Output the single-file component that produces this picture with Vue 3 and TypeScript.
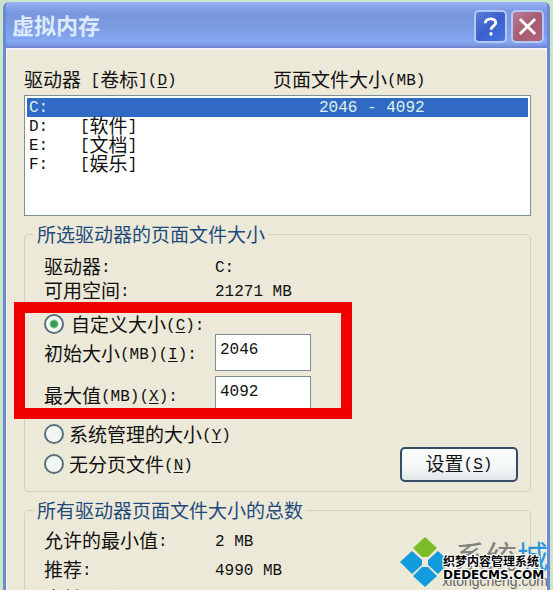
<script setup lang="ts">
import { h, ref, type FunctionalComponent } from 'vue'

interface Drive {
  letter: string
  label: string
  size: string
}

const drives: Drive[] = [
  { letter: 'C:', label: '', size: '2046 - 4092' },
  { letter: 'D:', label: '[软件]', size: '' },
  { letter: 'E:', label: '[文档]', size: '' },
  { letter: 'F:', label: '[娱乐]', size: '' },
]

const selected = ref('C:')
const mode = ref<'custom' | 'system' | 'none'>('custom')
const initialSize = ref('2046')
const maximumSize = ref('4092')

// Sets Latin runs in the half-width face; "&" marks the access key.
const Txt: FunctionalComponent<{ t: string }> = (props) =>
  (props.t.match(/&[A-Z]|[\x20-\x25\x27-\x7e]+|[^\x20-\x7e]+/g) ?? []).map((run) => {
    if (run[0] === '&') return h('u', { class: 'latin' }, run[1])
    return run.charCodeAt(0) < 127 ? h('span', { class: 'latin' }, run) : run
  })
Txt.props = ['t']
</script>

<template>
  <div class="desktop">
    <main class="window">
      <header class="titlebar">
        <h1>虚拟内存</h1>
        <button class="caption help" type="button" aria-label="帮助">
          <svg viewBox="0 0 20 20"><path d="M4.500 6.500C4.500 0.500 15.500 0.500 15.500 6c0 3.500-5 3.500-5 7.500" /><path d="M10.500 16v3.500" /></svg>
        </button>
        <button class="caption close" type="button" aria-label="关闭">
          <svg viewBox="0 0 20 20"><path d="M2 2l16 16M18 2L2 18" /></svg>
        </button>
      </header>

      <div class="content">
        <div class="columns">
          <span><Txt t="驱动器 [卷标](&D)" /></span>
          <span><Txt t="页面文件大小(MB)" /></span>
        </div>
        <div class="list">
          <table aria-label="驱动器">
            <colgroup><col class="c1" /><col class="c2" /><col /></colgroup>
            <tbody>
              <tr v-for="d in drives" :key="d.letter" :class="{ on: d.letter === selected }" @click="selected = d.letter">
                <td><Txt :t="d.letter" /></td>
                <td><Txt :t="d.label" /></td>
                <td><Txt :t="d.size" /></td>
              </tr>
            </tbody>
          </table>
        </div>

        <fieldset class="group">
          <legend>所选驱动器的页面文件大小</legend>
          <dl class="facts tight">
            <dt><Txt t="驱动器:" /></dt>
            <dd><Txt t="C:" /></dd>
            <dt><Txt t="可用空间:" /></dt>
            <dd><Txt t="21271 MB" /></dd>
          </dl>
          <div class="custom">
            <label class="choice first">
              <input v-model="mode" type="radio" name="mode" value="custom" />
              <span><Txt t="自定义大小(&C):" /></span>
            </label>
            <div class="field">
              <label for="initial"><Txt t="初始大小(MB)(&I):" /></label>
              <input id="initial" v-model="initialSize" type="text" />
            </div>
            <div class="field">
              <label for="maximum"><Txt t="最大值(MB)(&X):" /></label>
              <input id="maximum" v-model="maximumSize" type="text" />
            </div>
            <div class="marker" aria-hidden="true"></div>
          </div>
          <div class="bottom">
            <div class="choices">
              <label class="choice">
                <input v-model="mode" type="radio" name="mode" value="system" />
                <span><Txt t="系统管理的大小(&Y)" /></span>
              </label>
              <label class="choice">
                <input v-model="mode" type="radio" name="mode" value="none" />
                <span><Txt t="无分页文件(&N)" /></span>
              </label>
            </div>
            <button class="set" type="button"><Txt t="设置(&S)" /></button>
          </div>
        </fieldset>

        <fieldset class="group totals">
          <legend>所有驱动器页面文件大小的总数</legend>
          <dl class="facts">
            <dt><Txt t="允许的最小值:" /></dt>
            <dd><Txt t="2 MB" /></dd>
            <dt><Txt t="推荐:" /></dt>
            <dd><Txt t="4990 MB" /></dd>
            <dt><Txt t="当前已分配:" /></dt>
            <dd></dd>
          </dl>
        </fieldset>
      </div>
    </main>

    <div class="watermark">
      <svg class="logo" viewBox="0 0 50 52">
        <path fill="#7cbc28" d="M25 1l12 11-9 9h-6l-9-9z" />
        <path fill="#129bdd" d="M12 15l10 9v5L12 38 0 26z" />
        <path fill="#129bdd" d="M38 15l12 11-12 12-10-9v-5z" />
        <path fill="#129bdd" d="M22 31h6l9 9-12 11-12-11z" />
      </svg>
      <div class="brand">系统<b>城</b></div>
      <div class="site">xitongcheng.com</div>
      <div class="stamp">
        <span class="cn">织梦内容管理系统</span>
        <span class="en">DEDECMS.COM</span>
      </div>
    </div>
  </div>
</template>

<style>
body {
  margin: 0;
  background: #c9e7c8;
}
.latin {
  font-family: "Liberation Mono", monospace;
  font-size: 16px;
  line-height: 10px;
  vertical-align: 2px;
  white-space: pre;
}
u.latin {
  text-underline-offset: 2px;
}
</style>

<style scoped>
.desktop {
  position: relative;
  height: 100vh;
  overflow: hidden;
  box-sizing: border-box;
  padding: 2px 3px 0;
  background: #c9e7c8;
  color: #111;
  font: 19px/20px "Noto Sans CJK SC", sans-serif;
}
.window {
  border: 0 solid #7088d4;
  border-width: 0 3px;
  border-radius: 6px 6px 0 0;
  background: #ece9d8;
  overflow: hidden;
}
.titlebar {
  display: flex;
  align-items: center;
  gap: 4px;
  height: 46px;
  box-sizing: border-box;
  padding: 2px 3px 0 6px;
  background: linear-gradient(#9ab8f4 0, #88a6ec 10%, #7896de 25%, #7b9ae2 50%, #84a8f2 85%, #7c9ae4 93%, #6c80c8 100%);
}
h1 {
  flex: 1;
  margin: 0;
  padding-bottom: 4px;
  color: #dcebfd;
  font-size: 22px;
  line-height: 28px;
  font-weight: 700;
}
.caption {
  width: 33px;
  height: 33px;
  padding: 5px;
  border: 2px solid #b4c8f6;
  border-radius: 5px;
}
.help {
  background: linear-gradient(135deg, #5a7ed8, #3a60cc 50%, #4a74e0);
}
.close {
  background: linear-gradient(135deg, #b87a94, #a85c72 50%, #b06478);
}
.caption svg {
  display: block;
  width: 100%;
  height: 100%;
  fill: none;
  stroke: #fff;
  stroke-width: 3;
}
.content {
  padding: 19px 16px 0 18px;
  border: 1px solid #f4f4fa;
  border-top-width: 2px;
  border-bottom: 0;
}
.columns {
  display: grid;
  grid-template-columns: 249px 1fr;
  margin-left: -1px;
  margin-bottom: 6px;
}
.list {
  height: 115px;
  padding: 2px;
  border: 1px solid #7f8f98;
  margin: 0 -1px;
  background: #fff;
}
table {
  width: 100%;
  border-collapse: collapse;
  table-layout: fixed;
}
.c1 {
  width: 51px;
}
.c2 {
  width: 239px;
}
td {
  height: 15px;
  padding: 0 0 4px 2px;
  line-height: 15px;
}
.on {
  background: #316ac5;
  color: #dff3e8;
}
.group {
  min-width: 0;
  margin: 8px -1px 0;
  padding: 12px 12px 9px 19px;
  border: 1px solid #d3d0bd;
  border-radius: 5px;
}
.totals {
  padding-top: 10px;
}
legend {
  margin-left: -10px;
  padding: 0 3px;
  color: #1f4a7c;
}
.facts {
  display: grid;
  grid-template-columns: 171px 1fr;
  row-gap: 9px;
  margin: 0;
}
.tight {
  row-gap: 4px;
}
dd {
  margin: 0;
}
.custom {
  position: relative;
  margin-top: 2px;
  padding-top: 12px;
}
.marker {
  position: absolute;
  inset: 0 auto -6px -30px;
  width: 316px;
  border: 11px solid #f00000;
  pointer-events: none;
}
.choice {
  display: flex;
  align-items: center;
  gap: 5px;
}
.first {
  gap: 7px;
}
input[type="radio"] {
  appearance: none;
  width: 20px;
  height: 20px;
  margin: 0;
  border: 2px solid #58707c;
  border-radius: 50%;
  background: #f2f7f5;
}
input[type="radio"]:checked {
  background: radial-gradient(circle, #35a04e 0 3px, #8cc89a 4px, #f6faf6 5px);
}
.field {
  display: grid;
  grid-template-columns: 171px 96px;
  align-items: center;
  margin-bottom: 5px;
}
.field input {
  width: 100%;
  height: 37px;
  box-sizing: border-box;
  padding: 0 4px 6px;
  border: 1px solid #7c8c94;
  background: #fff;
  color: #111;
  font: 16px/24px "Liberation Mono", monospace;
}
.bottom {
  display: flex;
  align-items: flex-end;
  justify-content: space-between;
}
.choices {
  display: grid;
  gap: 10px;
  padding: 6px 0 8px;
}
.set {
  width: 118px;
  height: 35px;
  padding: 0 0 4px;
  border: 2px solid #344c64;
  border-radius: 5px;
  background: linear-gradient(#fdfefe, #f2f6f6 60%, #dfe6e8);
  color: #111;
  font: 19px/20px "Noto Sans CJK SC", sans-serif;
}
.watermark {
  position: absolute;
  right: 5px;
  bottom: 0;
  width: 150px;
  height: 54px;
}
.logo {
  position: absolute;
  left: 2px;
  top: 0;
  width: 50px;
  height: 52px;
}
.brand {
  position: absolute;
  left: 57px;
  top: 1px;
  color: #818181;
  font-size: 31px;
  line-height: 36px;
  white-space: nowrap;
}
.brand b {
  color: #2596e0;
  font-weight: 400;
}
.site {
  position: absolute;
  right: 0;
  bottom: 0;
  color: #666;
  font: 14px/18px "Liberation Sans", sans-serif;
}
.stamp {
  position: absolute;
  left: 45px;
  top: 18px;
  display: grid;
  color: #000;
  font-weight: 700;
  text-shadow: -1px -1px #fff, 1px -1px #fff, -1px 1px #fff, 1px 1px #fff, 0 -1px #fff, 0 1px #fff, -1px 0 #fff, 1px 0 #fff;
}
.cn {
  font-size: 12px;
  line-height: 14px;
}
.en {
  font: 700 12px/14px "DejaVu Sans", sans-serif;
}
</style>
